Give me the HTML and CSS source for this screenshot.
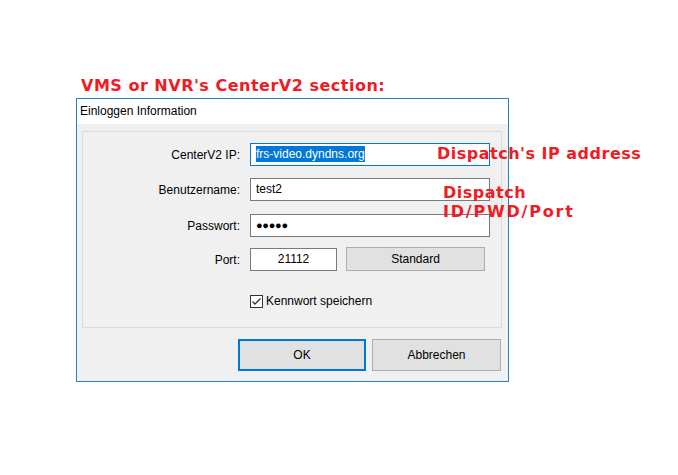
FILE: index.html
```html
<!DOCTYPE html>
<html>
<head>
<meta charset="utf-8">
<link rel="stylesheet" href="styles.css">
</head>
<body>
<div class="page">
  <div class="heading">VMS or NVR's CenterV2 section:</div>
  <div class="dialog">
    <div class="titlebar">Einloggen Information</div>
    <div class="dbody">
      <div class="group">
        <div class="row r1">
          <span class="label">CenterV2 IP:</span>
          <div class="input focus"><span class="sel">frs-video.dyndns.org</span></div>
        </div>
        <div class="row r2">
          <span class="label">Benutzername:</span>
          <div class="input">test2</div>
        </div>
        <div class="row r3">
          <span class="label">Passwort:</span>
          <div class="input pwd">●●●●●</div>
        </div>
        <div class="row r4">
          <span class="label">Port:</span>
          <div class="input port">21112</div>
          <div class="btn std">Standard</div>
        </div>
        <div class="row r5">
          <span class="label"></span>
          <span class="check"><svg width="13" height="13" viewBox="0 0 13 13"><rect x="0.5" y="0.5" width="12" height="12" fill="#fff" stroke="#333"/><path d="M2.5 6.5 L5 9 L10.5 3.5" fill="none" stroke="#333" stroke-width="1.3"/></svg></span>
          <span class="checklabel">Kennwort speichern</span>
        </div>
      </div>
      <div class="buttons">
        <div class="btn ok">OK</div>
        <div class="btn cancel">Abbrechen</div>
      </div>
    </div>
  </div>
  <div class="note n1">Dispatch's IP address</div>
  <div class="note n2">Dispatch<br><span class="wide">ID/PWD/Port</span></div>
</div>
</body>
</html>
```
FILE: styles.css
```css
html, body {
  margin: 0;
  padding: 0;
  background: #fff;
}
.page {
  position: relative;
  width: 678px;
  height: 475px;
  font-family: "Liberation Sans", Arial, sans-serif;
  font-size: 12px;
  color: #000;
}
.heading, .note {
  font-family: "DejaVu Sans", Verdana, sans-serif;
  font-weight: bold;
  font-size: 16px;
  letter-spacing: 0.5px;
  color: #ee1c25;
  line-height: 19px;
}
.wide { letter-spacing: 1.8px; }
.heading {
  padding: 76px 0 0 81px;
  height: 22px;
}
.dialog {
  margin-left: 76px;
  width: 431px;
  height: 282px;
  border: 1px solid #1883d7;
  background: #f0f0f0;
  display: flex;
  flex-direction: column;
}
.titlebar {
  height: 25px;
  background: #fff;
  line-height: 25px;
  padding-left: 3px;
  flex: none;
}
.dbody {
  flex: 1;
  padding: 7px 6px 0 5px;
}
.group {
  width: 418px;
  height: 195px;
  border: 1px solid #dcdcdc;
}
.row {
  display: flex;
  align-items: center;
  height: 23px;
}
.r1 { margin-top: 11px; }
.r2 { margin-top: 12px; }
.r3 { margin-top: 13px; }
.r4 { margin-top: 11px; }
.r5 { margin-top: 24px; height: 13px; }
.label {
  width: 157px;
  flex: none;
  text-align: right;
  margin-right: 10px;
  color: #000;
}
.input {
  box-sizing: border-box;
  width: 240px;
  height: 23px;
  border: 1px solid #7a7a7a;
  background: #fff;
  padding-left: 5px;
  line-height: 21px;
}
.input.focus {
  border-color: #0078d7;
}
.sel {
  background: #0078d7;
  color: #fff;
  padding: 1px 0 1px 0;
}
.pwd {
  font-size: 11px;
  letter-spacing: -0.3px;
  padding-left: 5px;
}
.port {
  width: 87px;
  text-align: center;
  padding-left: 0;
}
.btn {
  box-sizing: border-box;
  background: #e1e1e1;
  border: 1px solid #adadad;
  text-align: center;
}
.std {
  width: 139px;
  height: 24px;
  line-height: 22px;
  margin-left: 9px;
  margin-top: -1px;
}
.check {
  width: 13px;
  height: 13px;
  display: block;
  margin-right: 3px;
}
.check svg { display: block; }
.checklabel { margin-top: -2px; }
.buttons {
  display: flex;
  justify-content: flex-end;
  gap: 6px;
  margin-top: 11px;
  padding-right: 1px;
}
.ok {
  width: 128px;
  height: 32px;
  line-height: 28px;
  border: 2px solid #0078d7;
}
.cancel {
  width: 129px;
  height: 32px;
  line-height: 30px;
}
.note {
  position: absolute;
}
.n1 { left: 437px; top: 144px; }
.n2 { left: 443px; top: 183px; }
```
